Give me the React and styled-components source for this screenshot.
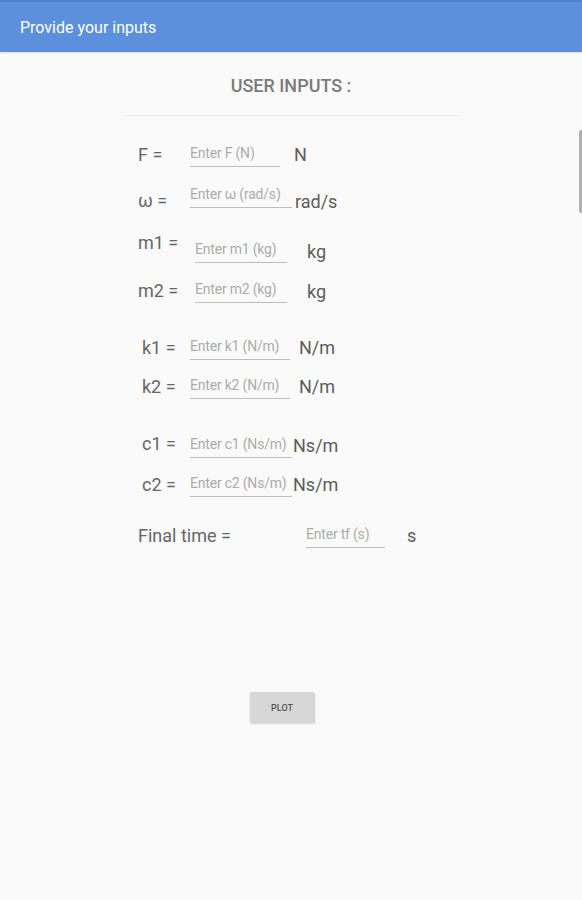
import React from 'react'
import styled, { createGlobalStyle } from 'styled-components';

const GlobalStyle = createGlobalStyle`
    html, body {
        margin: 0;
        padding: 0;
        background: #fafafa;
        font-family: Roboto, "Open Sans", "Noto Sans", sans-serif;
    }
`

const rows = [
    { label: 'F =', placeholder: 'Enter F (N)', unit: 'N', gap: 0, labelW: 52, inputW: 90, unitGap: 14 },
    { label: 'ω =', placeholder: 'Enter ω (rad/s)', unit: 'rad/s', gap: 11, labelW: 52, inputW: 102, unitGap: 3, labelDy: 5, unitDy: 6 },
    { label: 'm1 =', placeholder: 'Enter m1 (kg)', unit: 'kg', gap: 25, labelW: 57, inputW: 92, unitGap: 20, labelDy: -8, unitDy: 1 },
    { label: 'm2 =', placeholder: 'Enter m2 (kg)', unit: 'kg', gap: 10, labelW: 57, inputW: 92, unitGap: 20, unitDy: 1 },
    { label: 'k1 =', placeholder: 'Enter k1 (N/m)', unit: 'N/m', gap: 27, labelW: 52, indent: 4, inputW: 100, unitGap: 9 },
    { label: 'k2 =', placeholder: 'Enter k2 (N/m)', unit: 'N/m', gap: 9, labelW: 52, indent: 4, inputW: 100, unitGap: 9 },
    { label: 'c1 =', placeholder: 'Enter c1 (Ns/m)', unit: 'Ns/m', gap: 29, labelW: 52, indent: 4, inputW: 102, unitGap: 1, labelDy: -2 },
    { label: 'c2 =', placeholder: 'Enter c2 (Ns/m)', unit: 'Ns/m', gap: 9, labelW: 52, indent: 4, inputW: 102, unitGap: 1 },
    { label: 'Final time =', placeholder: 'Enter tf (s)', unit: 's', gap: 21, labelW: 168, inputW: 79, unitGap: 22 },
];

const App = () => {
    return (
        <Wrapper>
            <GlobalStyle />
            <TopBar>Provide your inputs</TopBar>
            <Content>
                <Heading>USER INPUTS :</Heading>
                <Divider />
                <Form>
                    {
                        rows.map((row, index) => {
                            return <Row key={index} $gap={row.gap}>
                                <Label $width={row.labelW} $indent={row.indent || 0} $dy={row.labelDy || 0}>
                                    {row.label}
                                </Label>
                                <Field $width={row.inputW} placeholder={row.placeholder} />
                                <Unit $gap={row.unitGap} $dy={row.unitDy || 0}>{row.unit}</Unit>
                            </Row>
                        })
                    }
                </Form>
                <ButtonArea>
                    <PlotButton>PLOT</PlotButton>
                </ButtonArea>
            </Content>
            <ScrollThumb />
        </Wrapper>
    )
}

const Wrapper = styled.div`
    position: relative;
    width: 582px;
    height: 900px;
    background: #fafafa;
    overflow: hidden;
`

const TopBar = styled.div`
    height: 50px;
    border-top: 2px solid #4d7fd0;
    background: #5c90dd;
    color: #ffffff;
    font-size: 16px;
    display: flex;
    align-items: center;
    padding-left: 20px;
    box-shadow: 0 1px 2px rgba(0,0,0,0.12);
`

const Content = styled.div`
    display: flex;
    flex-direction: column;
`

const Heading = styled.div`
    margin-top: 22px;
    text-align: center;
    font-size: 18px;
    font-weight: 500;
    color: #7a7a7a;
    line-height: 24px;
`

const Divider = styled.div`
    margin: 17px 0 0 124px;
    width: 335px;
    height: 1px;
    background: #ececec;
`

const Form = styled.div`
    display: flex;
    flex-direction: column;
    padding-left: 138px;
    margin-top: 23px;
`

const Row = styled.div`
    display: flex;
    align-items: center;
    height: 30px;
    margin-top: ${props => props.$gap}px;
`

const Label = styled.span`
    box-sizing: border-box;
    width: ${props => props.$width}px;
    padding-left: ${props => props.$indent}px;
    font-size: 18px;
    color: #666666;
    white-space: nowrap;
    margin-top: ${props => props.$dy > 0 ? props.$dy * 2 : 0}px;
    margin-bottom: ${props => props.$dy < 0 ? -props.$dy * 2 : 0}px;
`

const Field = styled.input`
    box-sizing: border-box;
    width: ${props => props.$width}px;
    height: 25px;
    padding: 0 0 1px 0;
    border: none;
    border-bottom: 1.5px solid #bdbdbd;
    background: transparent;
    font-family: Roboto, "Open Sans", sans-serif;
    font-size: 14px;
    letter-spacing: -0.2px;
    color: #444444;
    outline: none;
    &::placeholder {
        color: #acacac;
    }
`

const Unit = styled.span`
    margin-left: ${props => props.$gap}px;
    font-size: 18px;
    color: #5c5c5c;
    white-space: nowrap;
    margin-top: ${props => props.$dy * 2}px;
`

const ButtonArea = styled.div`
    display: flex;
    justify-content: center;
    padding-right: 18px;
    margin-top: 142px;
`

const PlotButton = styled.button`
    width: 65px;
    height: 31px;
    border: none;
    border-radius: 2px;
    background: #d7d7d7;
    box-shadow: 0 1px 2px rgba(0,0,0,0.15);
    color: #555555;
    font-family: Roboto, sans-serif;
    font-size: 9px;
    font-weight: 500;
`

const ScrollThumb = styled.div`
    position: absolute;
    right: 0;
    top: 130px;
    width: 3px;
    height: 83px;
    background: #b0b0b0;
    border-radius: 2px 0 0 2px;
`

export default App
